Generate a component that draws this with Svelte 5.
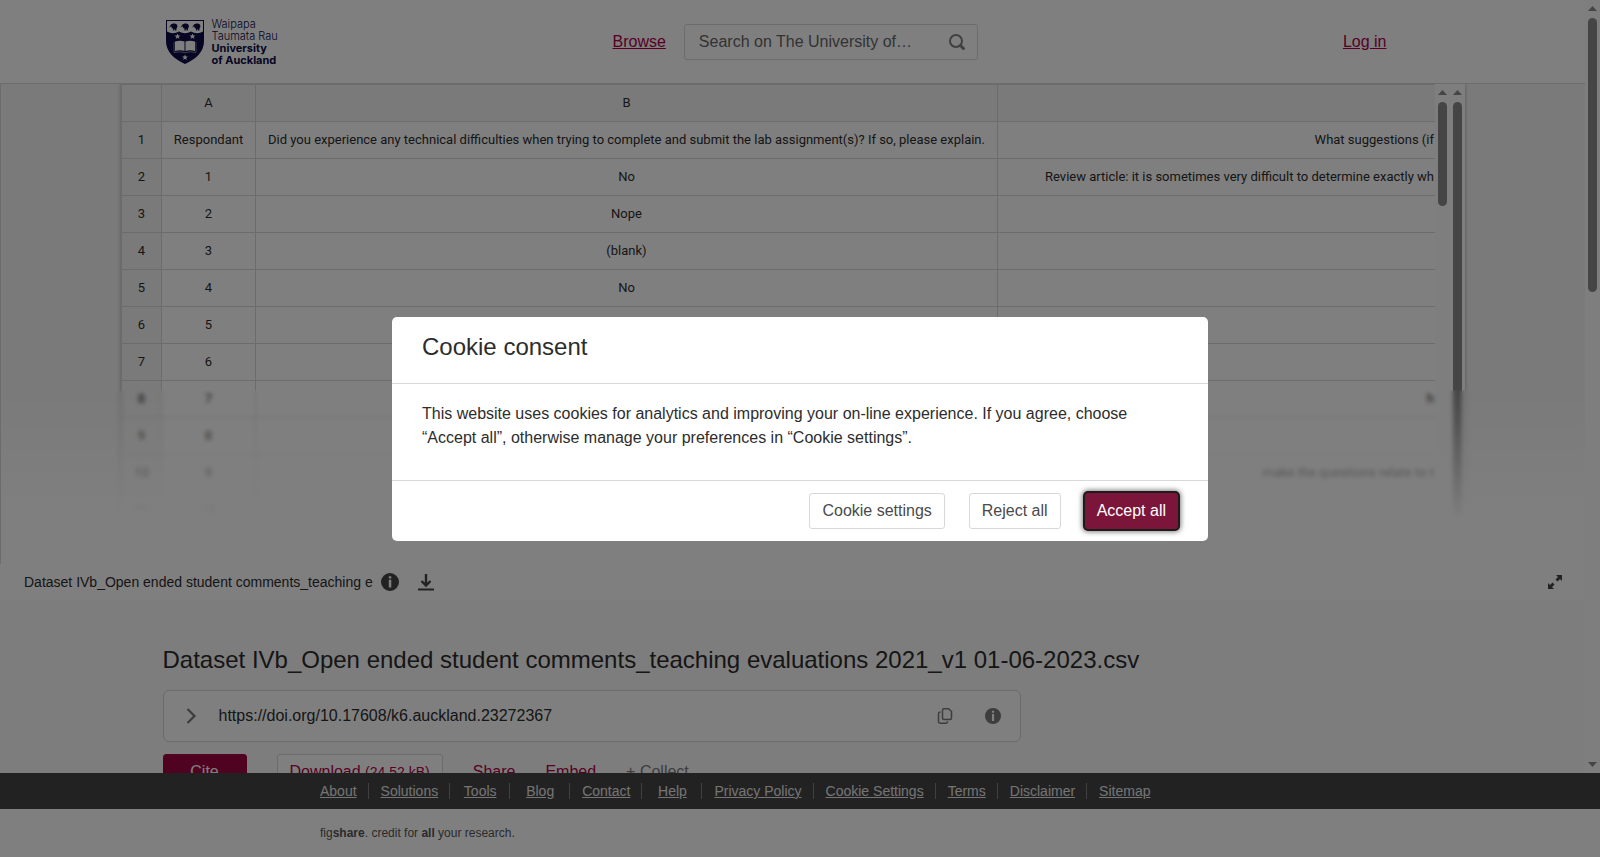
<script lang="ts">
	type Row = { id: string; difficulties?: string; suggestions?: string };

	const rows: Row[] = [
		{
			id: 'Respondant',
			difficulties:
				'Did you experience any technical difficulties when trying to complete and submit the lab assignment(s)? If so, please explain.',
			suggestions: 'What suggestions (if'
		},
		{
			id: '1',
			difficulties: 'No',
			suggestions: 'Review article: it is sometimes very difficult to determine exactly wh'
		},
		{ id: '2', difficulties: 'Nope' },
		{ id: '3', difficulties: '(blank)' },
		{ id: '4', difficulties: 'No' },
		{ id: '5' },
		{ id: '6' },
		{ id: '7', suggestions: 'h' },
		{ id: '8' },
		{ id: '9', suggestions: 'make the questions relate to t' },
		{ id: '10' },
		{ id: '11' }
	];

	const footerLinks = [
		'About',
		'Solutions',
		'Tools',
		'Blog',
		'Contact',
		'Help',
		'Privacy Policy',
		'Cookie Settings',
		'Terms',
		'Disclaimer',
		'Sitemap'
	];

	let showConsent = $state(true);
	let search = $state('');

	function closeConsent() {
		showConsent = false;
	}
</script>

<svelte:head>
	<title>Dataset IVb_Open ended student comments_teaching evaluations 2021_v1 01-06-2023.csv</title>
</svelte:head>

{#snippet infoIcon()}
	<svg viewBox="0 0 18 18" aria-hidden="true">
		<path
			fill="currentColor"
			fill-rule="evenodd"
			d="M9 0a9 9 0 1 0 0 18A9 9 0 0 0 9 0zM7.8 3.2h2.5v2.2H7.8zM7.8 6.8h2.5v7.8H7.8z"
		/>
	</svg>
{/snippet}

{#snippet arrow(down: boolean)}
	<svg class="arrow" viewBox="0 0 9 5" aria-hidden="true">
		<path fill="currentColor" d={down ? 'M0 0h9L4.5 5z' : 'M0 5h9L4.5 0z'} />
	</svg>
{/snippet}

<div class="app">
	<div class="scroll-area">
		<div class="content">
			<header>
				<div class="wrap header-row">
					<a class="logo" href="/" aria-label="University of Auckland">
						<svg viewBox="0 0 38 44" aria-hidden="true">
							<path
								fill="#0c0c48"
								d="M0 0h38v21c0 11-8 18-19 23C8 39 0 32 0 21z"
							/>
							<path fill="#fff" d="M1 1h36v10.500q-6 3.500-12 0-6 3.500-12 0-6 3.500-12 0z" />
							{#each [3, 14.5, 26] as x}
								<g fill="#0c0c48" transform="translate({x} 3)">
									<ellipse cx="5.300" cy="3.200" rx="3" ry="2.700" />
									<path d="M5 .6L2.200 1.200 0 4.600l2.800-1.700L4 4.500zM4.500 5l-.7 2.400h1.400L5.800 5zM6 5v2.400h1.400V5z" />
								</g>
							{/each}
							{#each [[11.5, 16.5], [26.5, 16.5], [19, 37.5]] as [x, y]}
								<path
									fill="#fff"
									transform="translate({x} {y})"
									d="M0-3L.8-.9 3-.9 1.200.5 1.900 2.600 0 1.300-1.900 2.600-1.200.5-3-.9-.8-.9z"
								/>
							{/each}
							<path
								fill="#fff"
								d="M9 21.500q5-1.500 9.500 0v9.500q-4.500-1.500-9.500 0zM19.500 21.500q4.500-1.500 9.500 0v9.500q-5-1.500-9.500 0z"
							/>
							<path fill="none" stroke="#aaa" stroke-width=".7" d="M8 22v10.500q6-1.500 11 .2 5-1.700 11-.2V22" />
						</svg>
						<span class="logo-text">
							<span>Waipapa</span>
							<span>Taumata Rau</span>
							<b>University</b>
							<b>of Auckland</b>
						</span>
					</a>
					<div class="header-center">
						<a href="/browse">Browse</a>
						<form class="search" role="search" onsubmit={(e) => e.preventDefault()}>
							<input
								type="text"
								aria-label="Search"
								placeholder="Search on The University of…"
								bind:value={search}
							/>
							<button type="submit" aria-label="Search">
								<svg viewBox="0 0 16 16" aria-hidden="true">
									<circle cx="7" cy="7" r="6" fill="none" stroke="currentColor" stroke-width="2" />
									<path stroke="currentColor" stroke-width="3" d="M10.500 10.500l5 5" />
								</svg>
							</button>
						</form>
					</div>
					<a class="login" href="/login">Log in</a>
				</div>
			</header>

			<section class="viewer">
				<div class="sheet">
					<div class="grid">
						<table>
							<colgroup>
								<col class="col-num" />
								<col class="col-a" />
								<col class="col-b" />
								<col />
							</colgroup>
							<thead>
								<tr>
									<th></th>
									<th>A</th>
									<th>B</th>
									<th></th>
								</tr>
							</thead>
							<tbody>
								{#each rows as row, i}
									<tr>
										<th>{i + 1}</th>
										<td>{row.id}</td>
										<td>{row.difficulties ?? ''}</td>
										<td class="cut">{row.suggestions ?? ''}</td>
									</tr>
								{/each}
							</tbody>
						</table>
					</div>
					<div class="scrollbar">
						{@render arrow(false)}
						<div class="thumb thumb-inner"></div>
					</div>
					<div class="scrollbar">
						{@render arrow(false)}
						<div class="thumb thumb-outer"></div>
					</div>
				</div>
				<div class="fade"></div>
			</section>

			<div class="file-bar">
				<span class="file-name">Dataset IVb_Open ended student comments_teaching e</span>
				<button class="icon" aria-label="File info">{@render infoIcon()}</button>
				<button class="icon download-icon" aria-label="Download file">
					<svg viewBox="0 0 18 18" aria-hidden="true">
						<path
							fill="none"
							stroke="currentColor"
							stroke-width="2.400"
							d="M9 1v11M4.500 8L9 12.500 13.500 8"
						/>
						<path fill="currentColor" d="M1 15.500h16v2H1z" />
					</svg>
				</button>
				<button class="icon expand-icon" aria-label="Full screen">
					<svg viewBox="0 0 14 14" aria-hidden="true">
						<path fill="currentColor" d="M8 0h6v6l-2-2-2.500 2.500-2-2L10 2zM0 8l2 2 2.500-2.500 2 2L4 12l2 2H0z" />
					</svg>
				</button>
			</div>

			<main class="wrap">
				<h1>Dataset IVb_Open ended student comments_teaching evaluations 2021_v1 01-06-2023.csv</h1>
				<div class="doi">
					<button class="icon chevron" aria-label="Show citation">
						<svg viewBox="0 0 16 16" aria-hidden="true">
							<path fill="none" stroke="currentColor" stroke-width="2.200" d="M4.500 1l7 7-7 7" />
						</svg>
					</button>
					<span class="doi-text">https://doi.org/10.17608/k6.auckland.23272367</span>
					<button class="icon" aria-label="Copy DOI">
						<svg viewBox="0 0 16 16" aria-hidden="true">
							<path
								fill="none"
								stroke="currentColor"
								stroke-width="1.500"
								d="M7 .8h4.500L14.500 3.500v6.500q0 1.500-1.500 1.500H7Q5.500 11.500 5.500 10V2.200Q5.500.8 7 .8zM3.500 4Q1.500 4 1.500 6v7.500q0 1.700 1.700 1.700H9q1.500 0 1.500-2"
							/>
						</svg>
					</button>
					<button class="icon" aria-label="DOI info">{@render infoIcon()}</button>
				</div>
				<div class="actions">
					<button class="btn cite">Cite</button>
					<a class="btn download" href="/download">Download <small>(24.52 kB)</small></a>
					<button class="plain">Share</button>
					<button class="plain">Embed</button>
					<button class="plain collect">+ Collect</button>
				</div>
			</main>
		</div>
		<div class="scrollbar">
			{@render arrow(false)}
			<div class="thumb thumb-page"></div>
			{@render arrow(true)}
		</div>
	</div>

	<footer>
		<nav aria-label="Footer">
			<ul>
				{#each footerLinks as link}
					<li><a href="/{link.toLowerCase().replace(' ', '-')}">{link}</a></li>
				{/each}
			</ul>
		</nav>
		<p>fig<b>share</b>. credit for <b>all</b> your research.</p>
	</footer>
</div>

{#if showConsent}
	<div class="overlay">
		<div class="dialog" role="dialog" aria-modal="true" aria-labelledby="consent-title">
			<h2 id="consent-title">Cookie consent</h2>
			<p>
				This website uses cookies for analytics and improving your on-line experience. If you agree,
				choose “Accept all”, otherwise manage your preferences in “Cookie settings”.
			</p>
			<div class="dialog-buttons">
				<button class="btn" onclick={closeConsent}>Cookie settings</button>
				<button class="btn" onclick={closeConsent}>Reject all</button>
				<button class="btn accept" onclick={closeConsent}>Accept all</button>
			</div>
		</div>
	</div>
{/if}

<style>
	:global(body) {
		margin: 0;
		font-family: 'Liberation Sans', Arial, sans-serif;
		font-size: 16px;
		color: #2d2d2d;
		background: #fff;
	}

	* {
		box-sizing: border-box;
	}

	button,
	input {
		font: inherit;
		color: inherit;
		border: none;
		background: none;
		padding: 0;
		margin: 0;
	}

	button {
		cursor: pointer;
	}

	a {
		color: #b00048;
	}

	svg {
		display: block;
	}

	.app {
		height: 100vh;
		display: flex;
		flex-direction: column;
	}

	.scroll-area {
		flex: 1;
		min-height: 0;
		display: flex;
		overflow: hidden;
	}

	.content {
		flex: 1;
		min-width: 0;
		background: #fafafa;
	}

	.wrap {
		max-width: 1260px;
		margin: 0 auto;
	}

	/* header */
	header {
		background: #fff;
		border-bottom: 1px solid #d8d8d8;
	}

	.header-row {
		display: flex;
		align-items: center;
		height: 83px;
	}

	.logo {
		display: flex;
		align-items: center;
		gap: 8px;
		width: 450px;
		padding-left: 3px;
		color: #0c0c48;
		text-decoration: none;
	}

	.logo svg {
		width: 38px;
		height: 44px;
	}

	.logo-text {
		display: flex;
		flex-direction: column;
		font-family: Inter, sans-serif;
		font-size: 11px;
		font-weight: 300;
		line-height: 12px;
	}

	.logo-text b {
		font-weight: 700;
	}

	.header-center {
		flex: 1;
		display: flex;
		align-items: center;
		gap: 18px;
	}

	.search {
		display: flex;
		align-items: center;
		width: 294px;
		height: 36px;
		padding: 0 12px 0 14px;
		border: 1px solid #d8d8d8;
		border-radius: 3px;
	}

	.search input {
		flex: 1;
		min-width: 0;
		outline: none;
	}

	.search input::placeholder {
		color: #666;
		opacity: 1;
	}

	.search button {
		color: #808080;
	}

	.search svg {
		width: 16px;
		height: 16px;
	}

	.login {
		margin-right: 36px;
	}

	/* spreadsheet preview */
	.viewer {
		position: relative;
		height: 480px;
		padding: 0 120px;
		border-left: 1px solid #d8d8d8;
		background: #f5f5f5;
		overflow: hidden;
	}

	.sheet {
		display: flex;
		height: 100%;
		background: #fff;
		box-shadow: 0 0 4px rgba(0, 0, 0, 0.3);
	}

	.grid {
		flex: 1;
		min-width: 0;
		overflow: hidden;
		border: 1px solid #d8d8d8;
		border-width: 1px 0 0 1px;
	}

	table {
		width: 100%;
		table-layout: fixed;
		border-collapse: separate;
		border-spacing: 0;
		font-family: Roboto, sans-serif;
		font-size: 13px;
	}

	.col-num {
		width: 40px;
	}

	.col-a {
		width: 94px;
	}

	.col-b {
		width: 742px;
	}

	th,
	td {
		height: 37px;
		padding: 0 0 2px;
		border-right: 1px solid #d8d8d8;
		border-bottom: 1px solid #d8d8d8;
		font-weight: 400;
		text-align: center;
		white-space: nowrap;
	}

	th {
		background: #f5f5f5;
	}

	th:last-child,
	td:last-child {
		border-right: none;
	}

	.cut {
		padding-right: 1px;
		text-align: right;
	}

	.fade {
		position: absolute;
		inset: 306px 0 0 0;
		background: linear-gradient(rgba(255, 255, 255, 0), #fff 75%);
		backdrop-filter: blur(2px);
	}

	.scrollbar {
		flex: none;
		display: flex;
		flex-direction: column;
		align-items: center;
		width: 15px;
		padding: 6px 0;
		background: #fcfcfc;
		color: #8b8b8b;
	}

	.arrow {
		flex: none;
		width: 9px;
		height: 5px;
	}

	.arrow:last-child {
		margin-top: auto;
	}

	.thumb {
		width: 9px;
		margin-top: 7px;
		border-radius: 5px;
		background: #8b8b8b;
	}

	.thumb-inner {
		height: 104px;
	}

	.thumb-outer {
		flex: 1;
	}

	.thumb-page {
		height: 36%;
	}

	/* file bar */
	.file-bar {
		display: flex;
		align-items: center;
		height: 36px;
		padding: 0 23px 0 24px;
		background: #fff;
		font-size: 14px;
	}

	.icon svg {
		width: 18px;
		height: 18px;
	}

	.file-bar .icon {
		margin-left: 8px;
		color: #444;
	}

	.file-bar .download-icon {
		margin-left: 18px;
	}

	.file-bar .expand-icon {
		margin-left: auto;
	}

	.expand-icon svg {
		width: 14px;
		height: 14px;
	}

	/* item details */
	h1 {
		margin: 0 0 14px;
		padding-top: 44px;
		font-size: 24px;
		font-weight: 400;
		line-height: 32px;
	}

	.doi {
		display: flex;
		align-items: center;
		max-width: 858px;
		height: 52px;
		padding: 0 19px;
		border: 1px solid #d8d8d8;
		border-radius: 6px;
		background: #fff;
	}

	.doi .icon {
		margin-left: 32px;
		color: #7a7a7a;
	}

	.doi .icon svg {
		width: 16px;
		height: 16px;
	}

	.doi .chevron {
		margin: 0 20px 0 0;
	}

	.doi-text {
		flex: 1;
	}

	.actions {
		display: flex;
		align-items: center;
		gap: 30px;
		margin-top: 12px;
		color: #b00048;
	}

	.btn {
		height: 36px;
		padding: 0 12px;
		border: 1px solid #d8d8d8;
		border-radius: 3px;
		background: #fff;
		line-height: 34px;
		text-decoration: none;
		white-space: nowrap;
	}

	.cite {
		width: 84px;
		border-color: #a00642;
		background: #a00642;
		color: #fff;
	}

	.download small {
		font-size: 14px;
	}

	.collect {
		color: #7a7a7a;
	}

	/* footer */
	nav {
		background: #444;
	}

	ul,
	footer p {
		max-width: 960px;
		margin: 0 auto;
		padding: 0;
	}

	ul {
		display: flex;
		align-items: center;
		height: 36px;
		list-style: none;
		font-size: 14px;
	}

	li {
		min-width: 60px;
		padding: 0 11px 0 12px;
		border-right: 1px solid #808080;
		line-height: 16px;
		text-align: center;
		white-space: nowrap;
	}

	li:first-child {
		min-width: 0;
		padding-left: 0;
	}

	li:last-child {
		border-right: none;
	}

	li a {
		color: #e8e8e8;
	}

	footer {
		background: #fff;
	}

	footer p {
		font-size: 12px;
		line-height: 48px;
		color: #555;
	}

	/* cookie consent */
	.overlay {
		position: fixed;
		inset: 0;
		display: grid;
		place-items: center;
		background: rgba(0, 0, 0, 0.5);
	}

	.dialog {
		width: 100%;
		max-width: 816px;
		border-radius: 5px;
		background: #fff;
	}

	.dialog h2 {
		margin: 0;
		padding: 14px 30px 20px;
		border-bottom: 1px solid #d8d8d8;
		font-size: 24px;
		font-weight: 400;
		line-height: 32px;
	}

	.dialog p {
		margin: 0;
		padding: 18px 30px 30px;
		line-height: 24px;
	}

	.dialog-buttons {
		display: flex;
		justify-content: flex-end;
		gap: 24px;
		padding: 12px 30px;
		border-top: 1px solid #d8d8d8;
		color: #4a4a4a;
	}

	.accept {
		border: none;
		background: #7b163a;
		box-shadow:
			0 0 0 2px #1c1c1c,
			0 0 5px 3px rgba(0, 0, 0, 0.5);
		color: #fff;
	}
</style>
